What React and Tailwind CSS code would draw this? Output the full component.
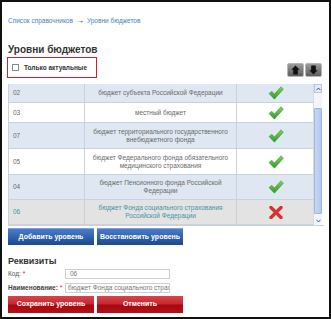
import React from "react";

const rows = [
  { code: "02", name: ["бюджет субъекта Российской Федерации"], ok: true, bg: "bg-[#dfe8f2]", h: "h-[19px]" },
  { code: "03", name: ["местный бюджет"], ok: true, bg: "bg-white", h: "h-[20px]" },
  { code: "07", name: ["бюджет территориального государственного", "внебюджетного фонда"], ok: true, bg: "bg-[#dfe8f2]", h: "h-[26px]" },
  { code: "05", name: ["бюджет Федерального фонда обязательного", "медицинского страхования"], ok: true, bg: "bg-white", h: "h-[26px]" },
  { code: "04", name: ["бюджет Пенсионного фонда Российской", "Федерации"], ok: true, bg: "bg-[#dfe8f2]", h: "h-[25px]" },
  { code: "06", name: ["бюджет Фонда социального страхования", "Российской Федерации"], ok: false, bg: "bg-[#e3e3e3]", h: "h-[25px]", sel: true },
];

function Check() {
  return (
    <svg width="16" height="14" viewBox="0 0 16 14">
      <defs>
        <linearGradient id="gc" x1="0" y1="0" x2="0" y2="1">
          <stop offset="0" stopColor="#7fd35a" />
          <stop offset="1" stopColor="#2f9a2c" />
        </linearGradient>
      </defs>
      <path d="M1 7.6 L3.8 5.2 L6.4 8 L13 0.8 L15.4 3.2 L6.4 13.2 Z" fill="url(#gc)" stroke="#3c8f2e" strokeWidth="0.5" strokeLinejoin="round" />
    </svg>
  );
}

function Cross() {
  return (
    <svg width="14" height="13" viewBox="0 0 14 13">
      <path d="M2 1.5 L12 11.5 M12 1.5 L2 11.5" stroke="#d8302c" strokeWidth="3.4" strokeLinecap="round" />
    </svg>
  );
}

function ArrowBtn({ up }) {
  return (
    <div className="w-[17px] h-[14px] rounded-[2px] border border-[#b5b5b5] bg-gradient-to-b from-[#9b9b9b] to-[#5e5e5e] flex items-center justify-center">
      <svg width="9" height="10" viewBox="0 0 9 10">
        {up ? (
          <path d="M4.5 0.5 L8.7 4.8 L6.8 4.8 L6.8 9.5 L2.2 9.5 L2.2 4.8 L0.3 4.8 Z" fill="#111" />
        ) : (
          <path d="M4.5 9.5 L8.7 5.2 L6.8 5.2 L6.8 0.5 L2.2 0.5 L2.2 5.2 L0.3 5.2 Z" fill="#111" />
        )}
      </svg>
    </div>
  );
}

export default function App() {
  return (
    <div className="w-[331px] h-[319px] border-2 border-[#111] bg-white overflow-hidden font-['Liberation_Sans',Arial,sans-serif] pl-[6px] pr-[5px] pt-[15px]">
      <div className="text-[6.5px] leading-[8px] text-[#4a7fc4] flex items-center">
        <span>Список справочников</span>
        <span className="mx-[3px] text-[#222] text-[8px] leading-[8px]">→</span>
        <span>Уровни бюджетов</span>
      </div>

      <div className="mt-[19px] text-[10px] leading-[12px] font-bold text-[#333]">Уровни бюджетов</div>

      <div className="mt-[1px] flex items-end justify-between">
        <div className="-ml-[1px] w-[90px] h-[21px] border-[1.5px] border-[#c8262c] flex items-center pl-[4px]">
          <div className="w-[7px] h-[7px] border border-[#888] bg-white" />
          <span className="ml-[5px] text-[6.5px] font-bold text-[#333]">Только актуальные</span>
        </div>
        <div className="flex gap-[1px] mr-[2px] mb-[1px]">
          <ArrowBtn up />
          <ArrowBtn />
        </div>
      </div>

      <div className="mt-[6px] flex h-[142px] border-b border-[#c9d2dc]">
        <div className="w-[305px] border-l border-[#c9d2dc]">
          {rows.map((r) => (
            <div key={r.code} className={`grid grid-cols-[75px_153px_77px] border-b border-[#c9d2dc] ${r.bg} ${r.h}`}>
              <div className={`flex items-center pl-[4px] text-[6.5px] ${r.sel ? "text-[#4a93a5]" : "text-[#6a6a6a]"}`}>{r.code}</div>
              <div className={`border-l border-r border-[#c9d2dc] flex items-center justify-center text-center text-[6.5px] leading-[8px] ${r.sel ? "text-[#4a93a5]" : "text-[#6a6a6a]"}`}>
                <div>
                  {r.name.map((l, i) => (
                    <div key={i}>{l}</div>
                  ))}
                </div>
              </div>
              <div className="flex items-center justify-center">{r.ok ? <Check /> : <Cross />}</div>
            </div>
          ))}
        </div>
        <div className="w-[9px] bg-[#f3f5f9] border-l border-[#d4dbe6] flex flex-col">
          <div className="h-[9px] border border-[#b7c6e2] bg-[#e3ebf8] flex items-center justify-center">
            <svg width="5" height="4" viewBox="0 0 5 4"><path d="M0.5 3.2 L2.5 1 L4.5 3.2" stroke="#3b5998" strokeWidth="1" fill="none" /></svg>
          </div>
          <div className="flex-1 pt-[15px] pb-[2px]">
            <div className="h-full rounded-[1px] border border-[#9fb6e3] bg-gradient-to-r from-[#c6d6f4] to-[#b4c8ee]" />
          </div>
          <div className="h-[9px] flex items-center justify-center">
            <svg width="5" height="4" viewBox="0 0 5 4"><path d="M0.5 0.8 L2.5 3 L4.5 0.8" stroke="#3b5998" strokeWidth="1" fill="none" /></svg>
          </div>
        </div>
      </div>

      <div className="mt-[2px] flex gap-[3px]">
        <div className="w-[86px] h-[17px] bg-gradient-to-b from-[#4a7dca] to-[#1a4891] border-t border-[#7ea3dc] flex items-center justify-center text-white text-[7px] font-bold">Добавить уровень</div>
        <div className="w-[86px] h-[17px] bg-gradient-to-b from-[#4a7dca] to-[#1a4891] border-t border-[#7ea3dc] flex items-center justify-center text-white text-[7px] font-bold">Восстановить уровень</div>
      </div>

      <div className="mt-[11px] text-[9px] leading-[10px] font-bold text-[#333]">Реквизиты</div>

      <div className="mt-[3px] flex items-center h-[10px]">
        <div className="w-[57px] text-[6.5px] text-[#555]">Код: <span className="text-[#d0202a]">*</span></div>
        <div className="w-[105px] h-[10px] border border-[#cfcfcf] text-[6.5px] leading-[8px] pl-[4px] text-[#777]">06</div>
      </div>

      <div className="mt-[4px] flex items-center h-[10px]">
        <div className="w-[57px] text-[6.5px] font-bold text-[#444] whitespace-nowrap">Наименование: <span className="text-[#d0202a] font-normal">*</span></div>
        <div className="w-[105px] h-[10px] border border-[#cfcfcf] text-[6.5px] leading-[8px] pl-[2px] text-[#777] whitespace-nowrap overflow-hidden">бюджет Фонда социального страх</div>
      </div>

      <div className="mt-[3px] flex gap-[3px]">
        <div className="w-[86px] h-[17px] bg-[linear-gradient(#d8444b_0%,#c4282f_48%,#a80810_52%,#b3101a_100%)] flex items-center justify-center text-white text-[7px] font-bold">Сохранить уровень</div>
        <div className="w-[86px] h-[17px] bg-[linear-gradient(#d8444b_0%,#c4282f_48%,#a80810_52%,#b3101a_100%)] flex items-center justify-center text-white text-[7px] font-bold">Отменить</div>
      </div>
    </div>
  );
}
